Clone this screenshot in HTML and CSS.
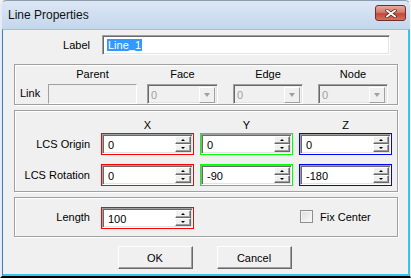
FILE: index.html
```html
<!DOCTYPE html>
<html lang="en">

<head>
    <meta charset="UTF-8">
    <title>Line Properties</title>
    <link rel="stylesheet" href="styles.css">
</head>

<body>

    <div class="window">

        <div class="titlebar">
            <span class="title">Line Properties</span>
            <button type="button" class="close-btn" aria-label="Close">
                <svg width="12" height="9" viewBox="0 0 12 9">
                    <path d="M2 1.5 L10 7.5 M10 1.5 L2 7.5" stroke="#4a1f1b" stroke-width="3.2" stroke-linecap="square"/>
                    <path d="M2 1.5 L10 7.5 M10 1.5 L2 7.5" stroke="#fff" stroke-width="1.8" stroke-linecap="square"/>
                </svg>
            </button>
        </div>

        <div class="client">

            <div class="label-row">
                <label for="label">Label</label>
                <div class="edit"><span class="selected">Line_1</span></div>
            </div>

            <div class="group link-group">
                <span class="link-label">Link</span>
                <div class="field parent-field">
                    <span class="head">Parent</span>
                    <div class="edit disabled"></div>
                </div>
                <div class="field face-field">
                    <span class="head">Face</span>
                    <div class="combo"><span>0</span><i class="drop"></i></div>
                </div>
                <div class="field edge-field">
                    <span class="head">Edge</span>
                    <div class="combo"><span>0</span><i class="drop"></i></div>
                </div>
                <div class="field node-field">
                    <span class="head">Node</span>
                    <div class="combo"><span>0</span><i class="drop"></i></div>
                </div>
            </div>

            <div class="group lcs-group">
                <div class="axis-row">
                    <span></span>
                    <span>X</span>
                    <span>Y</span>
                    <span>Z</span>
                </div>
                <div class="vec-row">
                    <label>LCS Origin</label>
                    <div class="spin red"><div class="spin-edit">0</div><div class="spin-btns"><i class="up"></i><i class="down"></i></div></div>
                    <div class="spin green"><div class="spin-edit">0</div><div class="spin-btns"><i class="up"></i><i class="down"></i></div></div>
                    <div class="spin blue"><div class="spin-edit">0</div><div class="spin-btns"><i class="up"></i><i class="down"></i></div></div>
                </div>
                <div class="vec-row">
                    <label>LCS Rotation</label>
                    <div class="spin red"><div class="spin-edit">0</div><div class="spin-btns"><i class="up"></i><i class="down"></i></div></div>
                    <div class="spin green"><div class="spin-edit">-90</div><div class="spin-btns"><i class="up"></i><i class="down"></i></div></div>
                    <div class="spin blue"><div class="spin-edit">-180</div><div class="spin-btns"><i class="up"></i><i class="down"></i></div></div>
                </div>
            </div>

            <div class="group length-group">
                <div class="vec-row">
                    <label>Length</label>
                    <div class="spin red"><div class="spin-edit">100</div><div class="spin-btns"><i class="up"></i><i class="down"></i></div></div>
                    <span></span>
                    <label class="check"><span class="box"></span>Fix Center</label>
                </div>
            </div>

            <div class="buttons">
                <button type="button" class="btn">OK</button>
                <button type="button" class="btn">Cancel</button>
            </div>

        </div>
    </div>

</body>
</html>
```

FILE: styles.css
```css
* {
    box-sizing: border-box;
}

body {
    margin: 0;
    background-color: #f0f0f0;
    font-family: "Liberation Sans", Arial, sans-serif;
    font-size: 11px;
    color: #000;
}

.window {
    width: 411px;
    height: 278px;
    display: flex;
    flex-direction: column;
    background: linear-gradient(#dce7f4, #c4d7ed 28px, #c4d7ed);
    border-top: 1px solid #8d9db0;
    border-left: 2px solid #e4ebf4;
    border-right: 1px solid #f4f7fb;
    border-bottom: 2px solid #000;
    border-radius: 6px 6px 0 0;
}

/* title bar */
.titlebar {
    height: 28px;
    display: flex;
    align-items: flex-start;
    justify-content: space-between;
    padding: 0 4px 0 6px;
}

.title {
    font-size: 12px;
    line-height: 14px;
    margin-top: 7px;
    color: #111;
}

.close-btn {
    width: 31px;
    height: 16px;
    margin-top: 4px;
    padding: 0;
    border: 1px solid #6f2f2a;
    border-radius: 3px;
    background: linear-gradient(#e9a99c, #d27b6b 45%, #c2483a 55%, #d5705c);
    display: flex;
    align-items: center;
    justify-content: center;
}

/* dialog body */
.client {
    flex: 1;
    background-color: #f0f0f0;
    border-top: 1px solid #a9bcd4;
    border-left: 1px solid #3d7bc6;
    border-right: 2px solid #38c4ec;
    border-bottom: 2px solid #38c4ec;
}

.label-row {
    display: grid;
    grid-template-columns: 87px 288px;
    column-gap: 12px;
    align-items: center;
    margin-top: 5px;
}

.label-row label {
    text-align: right;
}

.edit {
    height: 20px;
    background-color: #fff;
    border: 1px solid;
    border-color: #a0a0a0 #fff #fff #a0a0a0;
    box-shadow: inset 1px 1px 0 #696969, inset -1px -1px 0 #e3e3e3;
    padding: 3px 0 0 4px;
    line-height: 13px;
}

.selected {
    background-color: #3399ff;
    color: #fff;
    padding: 0 1px;
}

.edit.disabled {
    background-color: #f0f0f0;
    box-shadow: none;
}

/* group boxes */
.group {
    width: 384px;
    margin-left: 11px;
    border: 1px solid #a0a0a0;
    box-shadow: inset 1px 1px 0 #fff, 1px 1px 0 #fff;
}

.link-group {
    margin-top: 9px;
    display: flex;
    align-items: flex-end;
    padding: 2px 0 0 5px;
}

.link-label {
    width: 28px;
    line-height: 20px;
    margin-bottom: 1px;
}

.field {
    display: flex;
    flex-direction: column;
    align-items: stretch;
}

.field .head {
    line-height: 14px;
    text-align: center;
    margin-bottom: 3px;
}

.parent-field {
    width: 89px;
}

.face-field {
    width: 71px;
    margin-left: 10px;
}

.edge-field,
.node-field {
    width: 70px;
    margin-left: 15px;
}

.combo {
    height: 20px;
    display: flex;
    justify-content: space-between;
    background-color: #f0f0f0;
    border: 1px solid;
    border-color: #a0a0a0 #fff #fff #a0a0a0;
    box-shadow: inset 1px 1px 0 #696969, inset -1px -1px 0 #e3e3e3;
    padding: 2px;
    color: #a0a0a0;
}

.combo span {
    line-height: 16px;
    padding-left: 1px;
}

.drop {
    width: 16px;
    height: 16px;
    background-color: #f0f0f0;
    border: 1px solid;
    border-color: #fff #a0a0a0 #a0a0a0 #fff;
    display: flex;
    align-items: center;
    justify-content: center;
}

.drop::after {
    content: "";
    border-style: solid;
    border-width: 4px 3.5px 0 3.5px;
    border-color: #a0a0a0 transparent transparent transparent;
}

.lcs-group {
    margin-top: 5px;
    padding: 7px 0 5px;
}

.axis-row,
.vec-row {
    display: grid;
    grid-template-columns: 80px 93px 93px 93px;
    column-gap: 6px;
    align-items: center;
}

.axis-row {
    line-height: 14px;
    text-align: center;
    margin-bottom: 1px;
}

.vec-row + .vec-row {
    margin-top: 9px;
}

.vec-row > label {
    text-align: right;
    padding-right: 5px;
}

/* spin boxes */
.spin {
    height: 22px;
    display: flex;
    border: 1px solid;
}

.spin.red {
    border-color: #ff0000;
}

.spin.green {
    border-color: #00ff00;
}

.spin.blue {
    border-color: #0000ff;
}

.spin-edit {
    flex: 1;
    background-color: #fff;
    border: 1px solid;
    border-color: #a0a0a0 #fff #fff #a0a0a0;
    box-shadow: inset 1px 1px 0 #696969, inset -1px -1px 0 #e3e3e3;
    padding: 4px 0 0 5px;
    line-height: 13px;
    position: relative;
}

.spin-btns {
    width: 16px;
    display: flex;
    flex-direction: column;
    margin: 2px 2px 2px -18px;
    position: relative;
}

.spin-btns i {
    flex: 1;
    background-color: #f0f0f0;
    border: 1px solid;
    border-color: #fff #696969 #696969 #fff;
    box-shadow: inset -1px -1px 0 #a0a0a0;
    display: flex;
    align-items: center;
    justify-content: center;
}

.spin-btns .up::after {
    content: "";
    border-style: solid;
    border-width: 0 2px 2px 2px;
    border-color: transparent transparent #000 transparent;
}

.spin-btns .down::after {
    content: "";
    border-style: solid;
    border-width: 2px 2px 0 2px;
    border-color: #000 transparent transparent transparent;
}

.length-group {
    margin-top: 5px;
    padding: 9px 0 7px;
}

.length-group .vec-row > label {
    padding-bottom: 3px;
}

.check {
    display: flex;
    align-items: center;
    gap: 7px;
    margin-left: 1px;
}

.box {
    width: 13px;
    height: 13px;
    border: 1px solid #8e8f8f;
    background: linear-gradient(135deg, #dcdcdc, #fbfbfb);
    box-shadow: inset 0 0 0 1px #f4f4f4;
}

/* buttons */
.buttons {
    display: flex;
    justify-content: center;
    gap: 24px;
    margin-top: 9px;
    padding-right: 2px;
}

.btn {
    width: 75px;
    height: 23px;
    font-family: inherit;
    font-size: 11px;
    background-color: #f0f0f0;
    border: 1px solid;
    border-color: #fff #696969 #696969 #fff;
    box-shadow: inset -1px -1px 0 #a0a0a0;
    padding: 0;
}
```
